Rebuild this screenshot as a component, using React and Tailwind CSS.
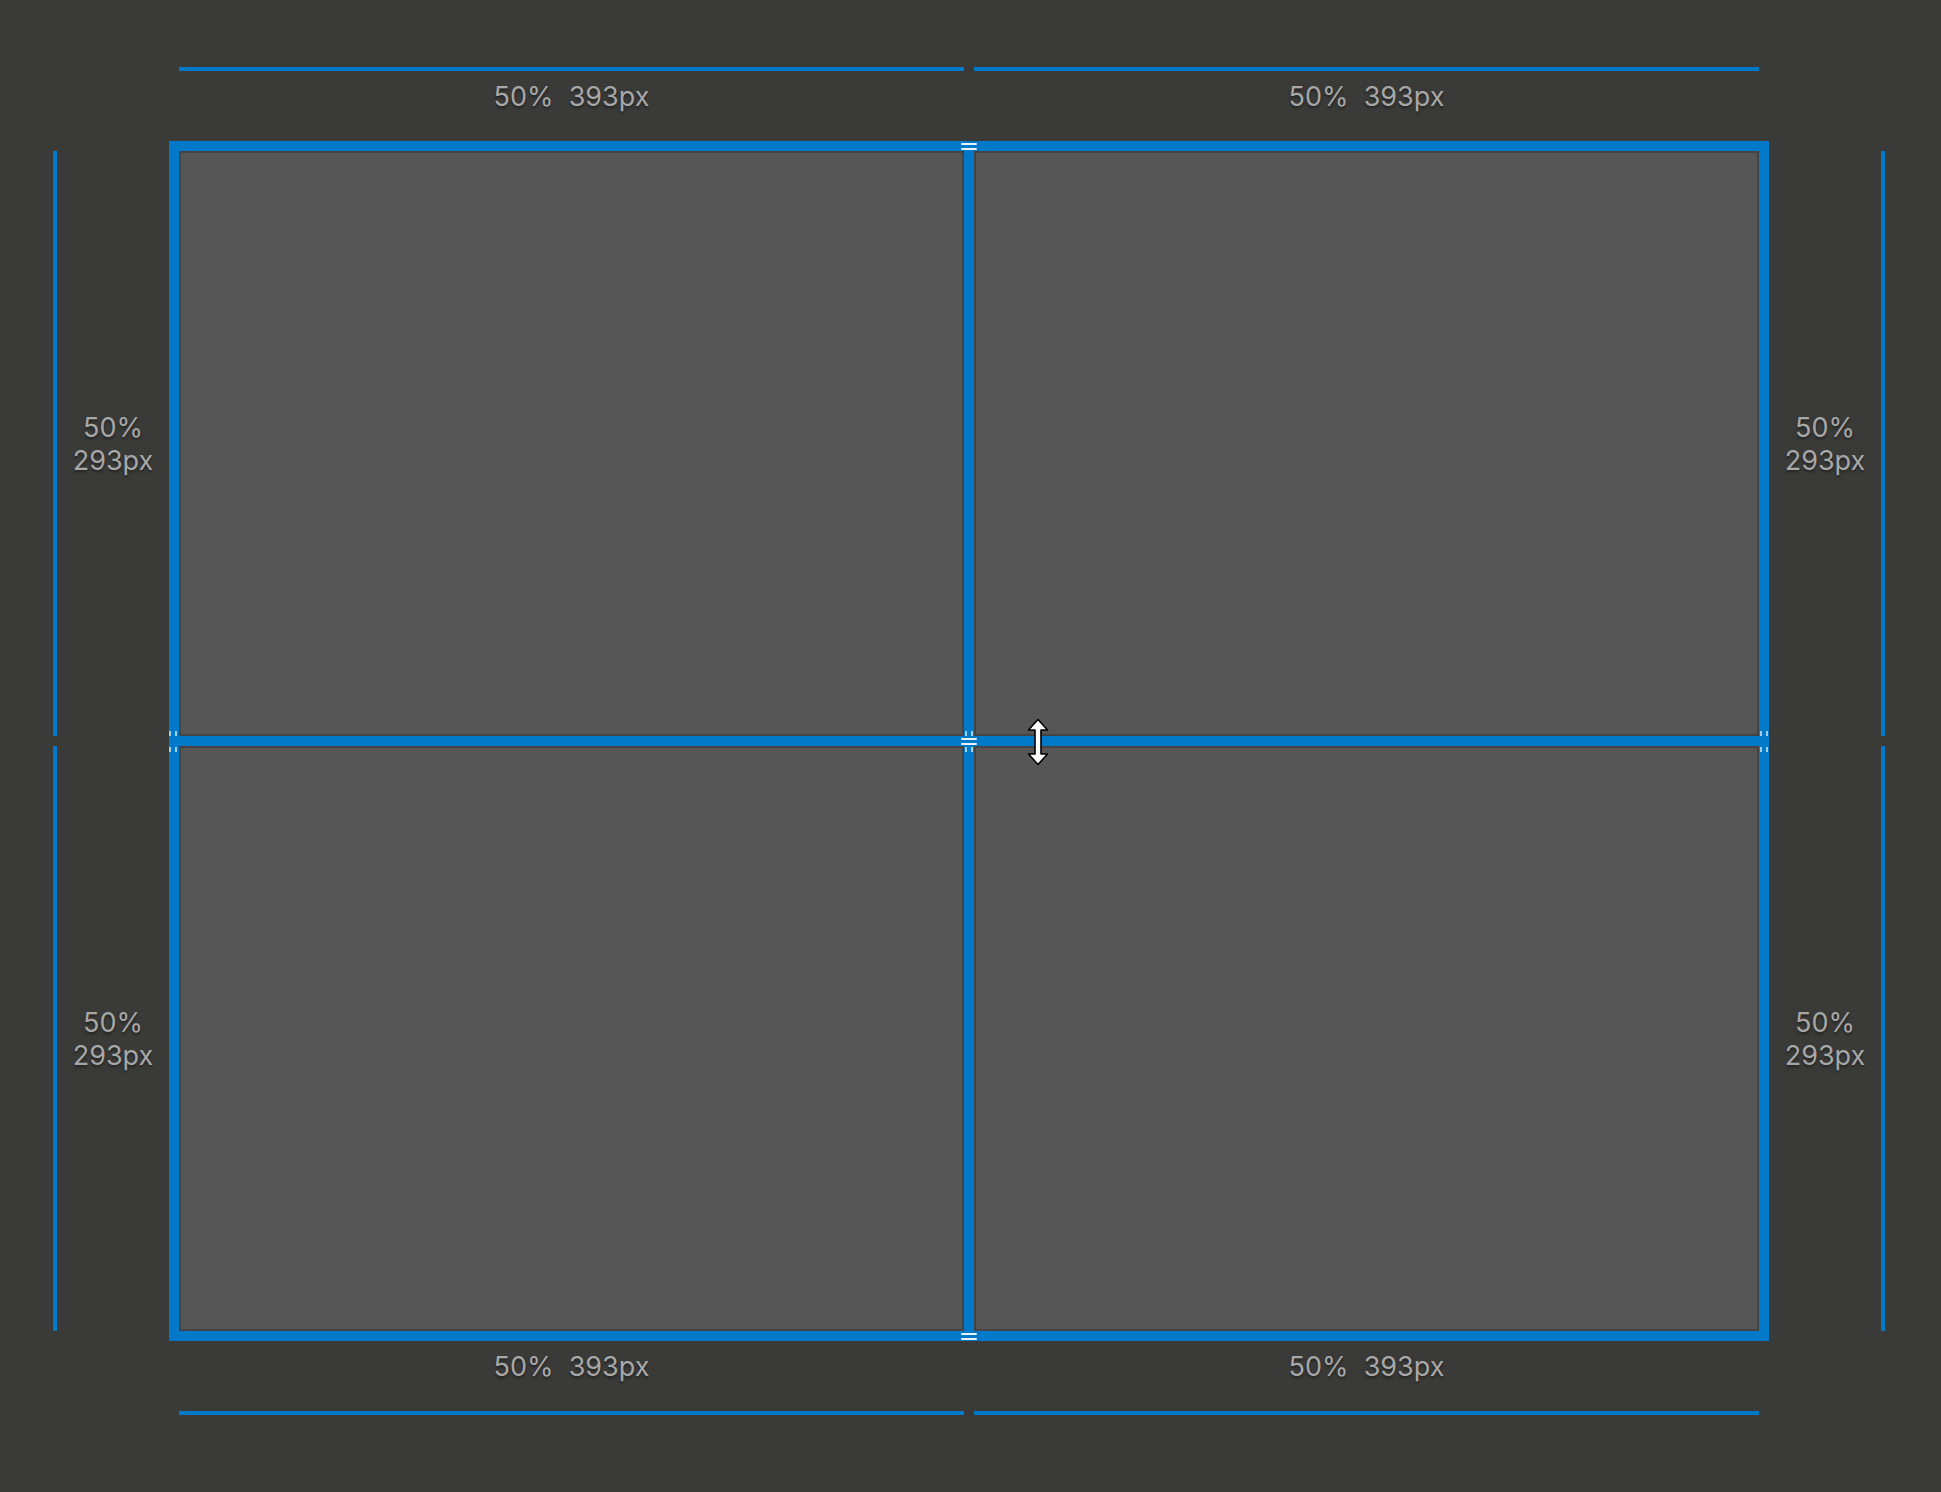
import React from 'react'

const blue = 'bg-[#0079c9]'
const label = "font-['Inter',sans-serif] text-[27px] leading-[33px] text-[#a7a7a7] [text-shadow:0_2px_3px_rgba(0,0,0,0.45)] whitespace-pre text-center"

function HLine() {
  return (
    <div className="grid h-full grid-cols-2 gap-[10px] px-[10px]">
      <div className={blue} />
      <div className={blue} />
    </div>
  )
}

function VLine() {
  return (
    <div className="grid h-full grid-rows-2 gap-[10px] py-[10px]">
      <div className={blue} />
      <div className={blue} />
    </div>
  )
}

function ColLabels({ className }) {
  return (
    <div className={`grid grid-cols-2 gap-[10px] px-[10px] ${className}`}>
      <div className={label}>50%  393px</div>
      <div className={label}>50%  393px</div>
    </div>
  )
}

function RowLabels() {
  return (
    <div className="grid h-full grid-rows-2 gap-[10px] py-[10px]">
      {[0, 1].map((i) => (
        <div key={i} className="flex items-center justify-center">
          <div className={label}>
            50%
            <br />
            293px
          </div>
        </div>
      ))}
    </div>
  )
}

// small white grip marks on the split bars
function HGrip({ x, y }) {
  return (
    <div className="absolute flex flex-col gap-[3px]" style={{ left: x, top: y }}>
      <div className="h-[2px] w-[16px] rounded-full bg-[#e6f3fc]" />
      <div className="h-[2px] w-[16px] rounded-full bg-[#e6f3fc]" />
    </div>
  )
}

function VGrip({ x, y }) {
  return (
    <div className="absolute flex gap-[4px]" style={{ left: x, top: y }}>
      <div className="h-[5px] w-[2px] bg-[#9fd0f0]" />
      <div className="h-[5px] w-[2px] bg-[#9fd0f0]" />
    </div>
  )
}

function Cursor() {
  return (
    <svg className="absolute left-[858px] top-[577px]" width="22" height="48" viewBox="0 0 22 48">
      <path
        d="M11 1.5 L20.5 12 L14 12 L14 36 L20.5 36 L11 46.5 L1.5 36 L8 36 L8 12 L1.5 12 Z"
        fill="#ffffff"
        stroke="#000000"
        strokeWidth="1.6"
        strokeLinejoin="round"
      />
    </svg>
  )
}

function Cell() {
  return <div className="border-2 border-[#444444] bg-[#565656]" />
}

export default function App() {
  return (
    <div className="grid h-[1492px] w-full grid-cols-[53px_4px_112px_1600px_112px_4px_1fr] grid-rows-[67px_4px_70px_1200px_70px_4px_1fr] bg-[#3a3a38]">
      <div className="col-start-4 row-start-2">
        <HLine />
      </div>
      <ColLabels className="col-start-4 row-start-3 pt-[9px]" />

      <div className="col-start-2 row-start-4">
        <VLine />
      </div>
      <div className="col-start-3 row-start-4">
        <RowLabels />
      </div>

      <div className={`relative col-start-4 row-start-4 grid grid-cols-2 grid-rows-2 gap-[10px] p-[10px] ${blue}`}>
        <Cell />
        <Cell />
        <Cell />
        <Cell />
        <HGrip x={792} y={2} />
        <HGrip x={792} y={1192} />
        <HGrip x={792} y={597} />
        <VGrip x={796} y={590} />
        <VGrip x={796} y={606} />
        <VGrip x={0} y={590} />
        <VGrip x={0} y={606} />
        <VGrip x={1591} y={590} />
        <VGrip x={1591} y={606} />
        <Cursor />
      </div>

      <div className="col-start-5 row-start-4">
        <RowLabels />
      </div>
      <div className="col-start-6 row-start-4">
        <VLine />
      </div>

      <ColLabels className="col-start-4 row-start-5 pt-[9px]" />
      <div className="col-start-4 row-start-6">
        <HLine />
      </div>
    </div>
  )
}
